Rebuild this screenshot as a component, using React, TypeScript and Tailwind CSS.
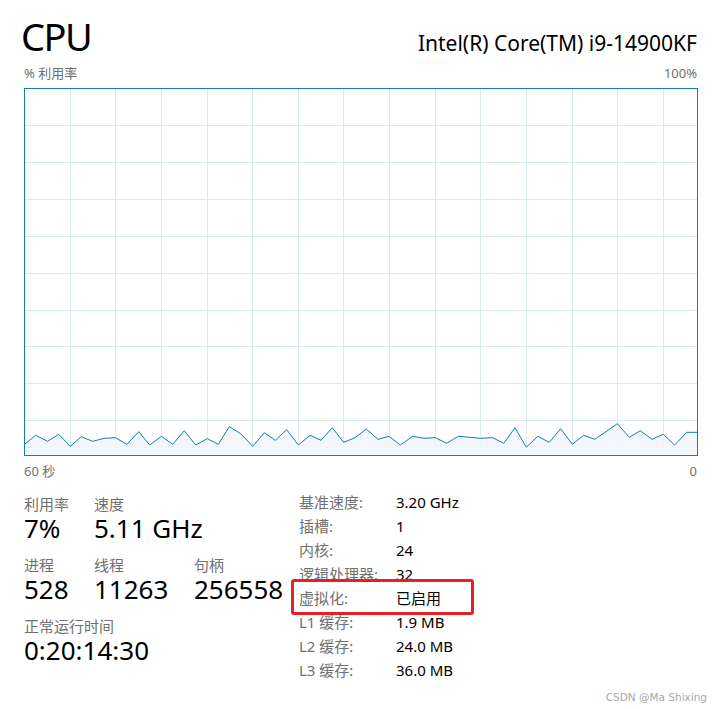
import React from "react";

const FONT = "font-['Noto_Sans','Noto_Sans_CJK_SC',sans-serif]";

// sampled usage curve, page coordinates
const points: [number, number][] = [
  [25, 444], [35.7, 435.3], [47.7, 441.3], [58.7, 434.3], [70.3, 446.3], [81.3, 436.7],
  [92.7, 441.3], [104.3, 438.3], [115.3, 437.7], [127, 444.3], [138.7, 431.7], [149.7, 445],
  [161.3, 436.3], [172.7, 444.3], [184.3, 430.7], [195.7, 445], [207.3, 438.7], [218.3, 444.3],
  [229.3, 426.7], [240.7, 433.7], [252.7, 446.3], [264.3, 432.7], [275.3, 440.3], [286.7, 429.7],
  [298.3, 445], [310, 435.3], [321, 440.3], [332.3, 427.7], [343.7, 442.3], [355, 437.7],
  [366.3, 429], [378, 439.3], [389, 436.3], [400.3, 445], [412.7, 436.3], [424, 438.3],
  [435.3, 437.7], [446.7, 443.3], [458.3, 436.3], [469.7, 437.3], [480.7, 438.3], [492.7, 437.7],
  [503.7, 443.3], [515, 427.7], [526.3, 447.3], [537.7, 436.3], [549.3, 442.3], [560.7, 428.7],
  [572.3, 444.3], [583.7, 435.3], [594.7, 439.3], [606, 431.7], [617.3, 423.7], [629.3, 437.3],
  [640.3, 430.7], [652, 439.3], [663.3, 434.3], [674.7, 445], [686.7, 432.3], [697, 432.3],
];

const vLines = [70, 115, 161, 207, 252, 298, 343, 389, 435, 480, 526, 572, 617, 663];
const hLines = [125, 162, 199, 236, 273, 310, 346, 383, 420];

function UsageGraph() {
  const line = points.map(([x, y]) => `${x},${y}`).join(" ");
  const area = `${line} 697,456 25,456`;
  return (
    <div className="w-[674px] h-[368px] border border-[#117dbb]">
      <svg width="672" height="366" viewBox="25 89 672 366" className="block">
        {vLines.map((x) => (
          <line key={`v${x}`} x1={x + 0.5} y1={89} x2={x + 0.5} y2={455} stroke="#d9eaf4" strokeWidth="1" />
        ))}
        {hLines.map((y) => (
          <line key={`h${y}`} x1={25} y1={y + 0.5} x2={697} y2={y + 0.5} stroke="#d9eaf4" strokeWidth="1" />
        ))}
        <polygon points={area} fill="#f1f6fa" fillOpacity="0.85" />
        <polyline points={line} fill="none" stroke="#117dbb" strokeWidth="1" strokeLinejoin="round" />
      </svg>
    </div>
  );
}

function Stat({ label, value, width }: { label: string; value: string; width: string }) {
  return (
    <div className={`${width} shrink-0`}>
      <div className="text-[15px] leading-[20px] text-[#707070]">{label}</div>
      <div className="text-[26px] leading-[28px] text-black">{value}</div>
    </div>
  );
}

const details: [string, string][] = [
  ["基准速度:", "3.20 GHz"],
  ["插槽:", "1"],
  ["内核:", "24"],
  ["逻辑处理器:", "32"],
  ["虚拟化:", "已启用"],
  ["L1 缓存:", "1.9 MB"],
  ["L2 缓存:", "24.0 MB"],
  ["L3 缓存:", "36.0 MB"],
];

export default function App() {
  return (
    <div className={`relative w-[728px] h-[709px] bg-white overflow-hidden ${FONT}`}>
      <div className="pl-[24px] pr-[31px] pt-[12px]">
        <div className="flex items-baseline justify-between">
          <span className="text-[38px] leading-[48px] text-black -ml-[3px] tracking-[-1.5px]">CPU</span>
          <span className="text-[21px] leading-[28px] text-black">Intel(R) Core(TM) i9-14900KF</span>
        </div>
        <div className="flex justify-between text-[13px] leading-[18px] text-[#707070] mt-[4px] mb-[6px]">
          <span>% 利用率</span>
          <span>100%</span>
        </div>
        <UsageGraph />
        <div className="flex justify-between text-[13px] leading-[18px] text-[#707070] mt-[6px]">
          <span>60 秒</span>
          <span>0</span>
        </div>

        <div className="flex mt-[14px]">
          <div className="w-[275px] shrink-0 flex flex-col gap-[13px]">
            <div className="flex">
              <Stat label="利用率" value="7%" width="w-[70px]" />
              <Stat label="速度" value="5.11 GHz" width="w-[140px]" />
            </div>
            <div className="flex">
              <Stat label="进程" value="528" width="w-[70px]" />
              <Stat label="线程" value="11263" width="w-[100px]" />
              <Stat label="句柄" value="256558" width="w-[100px]" />
            </div>
            <div className="flex">
              <Stat label="正常运行时间" value="0:20:14:30" width="w-[200px]" />
            </div>
          </div>
          <div className="text-[15px] leading-[24px] -mt-[4px]">
            {details.map(([k, v]) => (
              <div key={k} className="flex">
                <span className="w-[97px] shrink-0 text-[#707070]">{k}</span>
                <span className="text-black">{v}</span>
              </div>
            ))}
          </div>
        </div>
      </div>

      <div className="absolute left-[291px] top-[579px] w-[183px] h-[36px] border-[3px] border-[#e5202b] rounded-[3px]" />

      <div className="absolute right-[21px] bottom-[5px] text-[10.5px] leading-[14px] text-[#a8a8a8] font-['DejaVu_Sans',sans-serif]">
        CSDN @Ma Shixing
      </div>
    </div>
  );
}
